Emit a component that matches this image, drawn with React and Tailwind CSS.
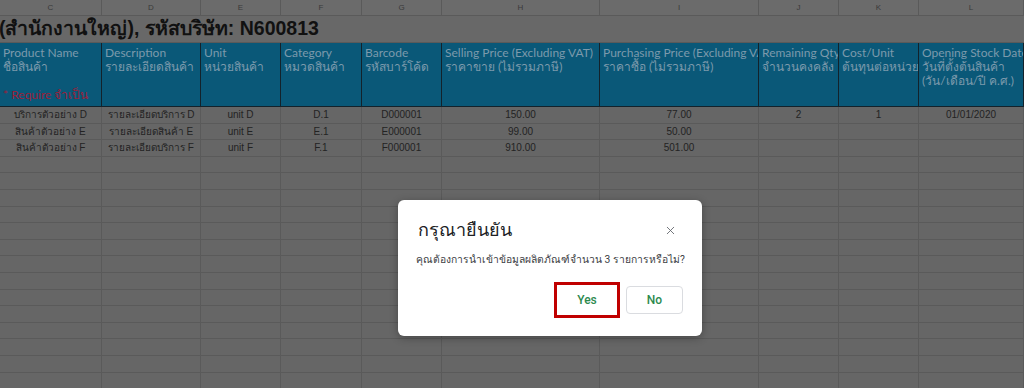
import { X } from 'lucide-react';

const cols = [
  { key: 'C', w: 'w-[102px]' },
  { key: 'D', w: 'w-[99px]' },
  { key: 'E', w: 'w-[80px]' },
  { key: 'F', w: 'w-[81px]' },
  { key: 'G', w: 'w-[80px]' },
  { key: 'H', w: 'w-[158px]' },
  { key: 'I', w: 'w-[159px]' },
  { key: 'J', w: 'w-[80px]' },
  { key: 'K', w: 'w-[80px]' },
  { key: 'L', w: 'w-[105px]' },
];

const headers = [
  ['Product Name', 'ชื่อสินค้า'],
  ['Description', 'รายละเอียดสินค้า'],
  ['Unit', 'หน่วยสินค้า'],
  ['Category', 'หมวดสินค้า'],
  ['Barcode', 'รหัสบาร์โค้ด'],
  ['Selling Price (Excluding VAT)', 'ราคาขาย (ไม่รวมภาษี)'],
  ['Purchasing Price (Excluding VAT)', 'ราคาซื้อ (ไม่รวมภาษี)'],
  ['Remaining Qty', 'จำนวนคงคลัง'],
  ['Cost/Unit', 'ต้นทุนต่อหน่วย'],
  ['Opening Stock Date', 'วันที่ตั้งต้นสินค้า', '(วัน/เดือน/ปี ค.ศ.)'],
];

const rows = [
  ['บริการตัวอย่าง D', 'รายละเอียดบริการ D', 'unit D', 'D.1', 'D000001', '150.00', '77.00', '2', '1', '01/01/2020'],
  ['สินค้าตัวอย่าง E', 'รายละเอียดสินค้า E', 'unit E', 'E.1', 'E000001', '99.00', '50.00', '', '', ''],
  ['สินค้าตัวอย่าง F', 'รายละเอียดบริการ F', 'unit F', 'F.1', 'F000001', '910.00', '501.00', '', '', ''],
];

const emptyRows = Array.from({ length: 14 });

export default function App() {
  return (
    <div className="relative w-[1024px] h-[388px] overflow-hidden bg-[#666666] font-['Liberation_Sans',sans-serif]">
      {/* column letters */}
      <div className="flex h-[16px] bg-[#6b6b6b] border-b border-[#5a5a5a]">
        {cols.map((c) => (
          <div key={c.key} className={`${c.w} shrink-0 border-r border-[#5a5a5a] flex items-center justify-center text-[8px] text-[#3a3a3a]`}>
            {c.key}
          </div>
        ))}
      </div>

      {/* title row */}
      <div className="h-[27px] flex items-center bg-[#686868] border-b border-[#5a5a5a] whitespace-nowrap">
        <span className="text-[19.5px] font-bold text-[#111] -ml-[1px] leading-none">(สำนักงานใหญ่), รหัสบริษัท: N600813</span>
      </div>

      {/* header row */}
      <div className="flex h-[64px] bg-[#0a5878] border-b border-[#13222b]">
        {cols.map((c, i) => (
          <div key={c.key} className={`${c.w} shrink-0 border-r border-[#13222b] relative overflow-hidden px-[3px] pt-[3px] text-[12px] leading-[14px] text-[#7c9aac] font-['Lato',sans-serif] whitespace-nowrap`}>
            {headers[i].map((t) => (
              <div key={t}>{t}</div>
            ))}
            {i === 0 && (
              <div className="absolute left-[3px] bottom-[4px] text-[#9a1f3a]">* Require จำเป็น</div>
            )}
          </div>
        ))}
      </div>

      {/* data rows */}
      {rows.map((r, ri) => (
        <div key={ri} className="flex h-[16.6px] border-b border-[#5a5a5a]">
          {cols.map((c, i) => (
            <div key={c.key} className={`${c.w} shrink-0 border-r border-[#5a5a5a] flex items-center justify-center text-[10px] text-[#232323] whitespace-nowrap overflow-hidden`}>
              {r[i]}
            </div>
          ))}
        </div>
      ))}
      {emptyRows.map((_, ri) => (
        <div key={ri} className="flex h-[16.6px] border-b border-[#5a5a5a]">
          {cols.map((c) => (
            <div key={c.key} className={`${c.w} shrink-0 border-r border-[#5a5a5a]`} />
          ))}
        </div>
      ))}

      {/* dialog */}
      <div className="absolute left-[398px] top-[200px] w-[304px] h-[136px] bg-white rounded-[6px] shadow-[0_2px_8px_rgba(0,0,0,0.3)] px-[20px] font-['Roboto',sans-serif]">
        <div className="flex items-center justify-between pt-[19px]">
          <h2 className="text-[18px] leading-[22px] text-[#202124]">กรุณายืนยัน</h2>
          <X size={13} strokeWidth={1.6} className="text-[#5f6368] mr-[5px]" />
        </div>
        <p className="mt-[12px] text-[10.3px] leading-[14px] text-[#3c4043] -ml-[2px] whitespace-nowrap">
          คุณต้องการนำเข้าข้อมูลผลิตภัณฑ์จำนวน 3 รายการหรือไม่?
        </p>
        <div className="flex justify-end items-center gap-[6px] mt-[15px] mr-[-1px]">
          <div className="w-[66px] h-[36px] border-[3px] border-[#c00000] flex items-center justify-center text-[12px] font-medium text-[#2d8a4e]">
            Yes
          </div>
          <div className="w-[57px] h-[28px] border border-[#dadce0] rounded-[4px] flex items-center justify-center text-[12px] font-medium text-[#2d8a4e]">
            No
          </div>
        </div>
      </div>
    </div>
  );
}
